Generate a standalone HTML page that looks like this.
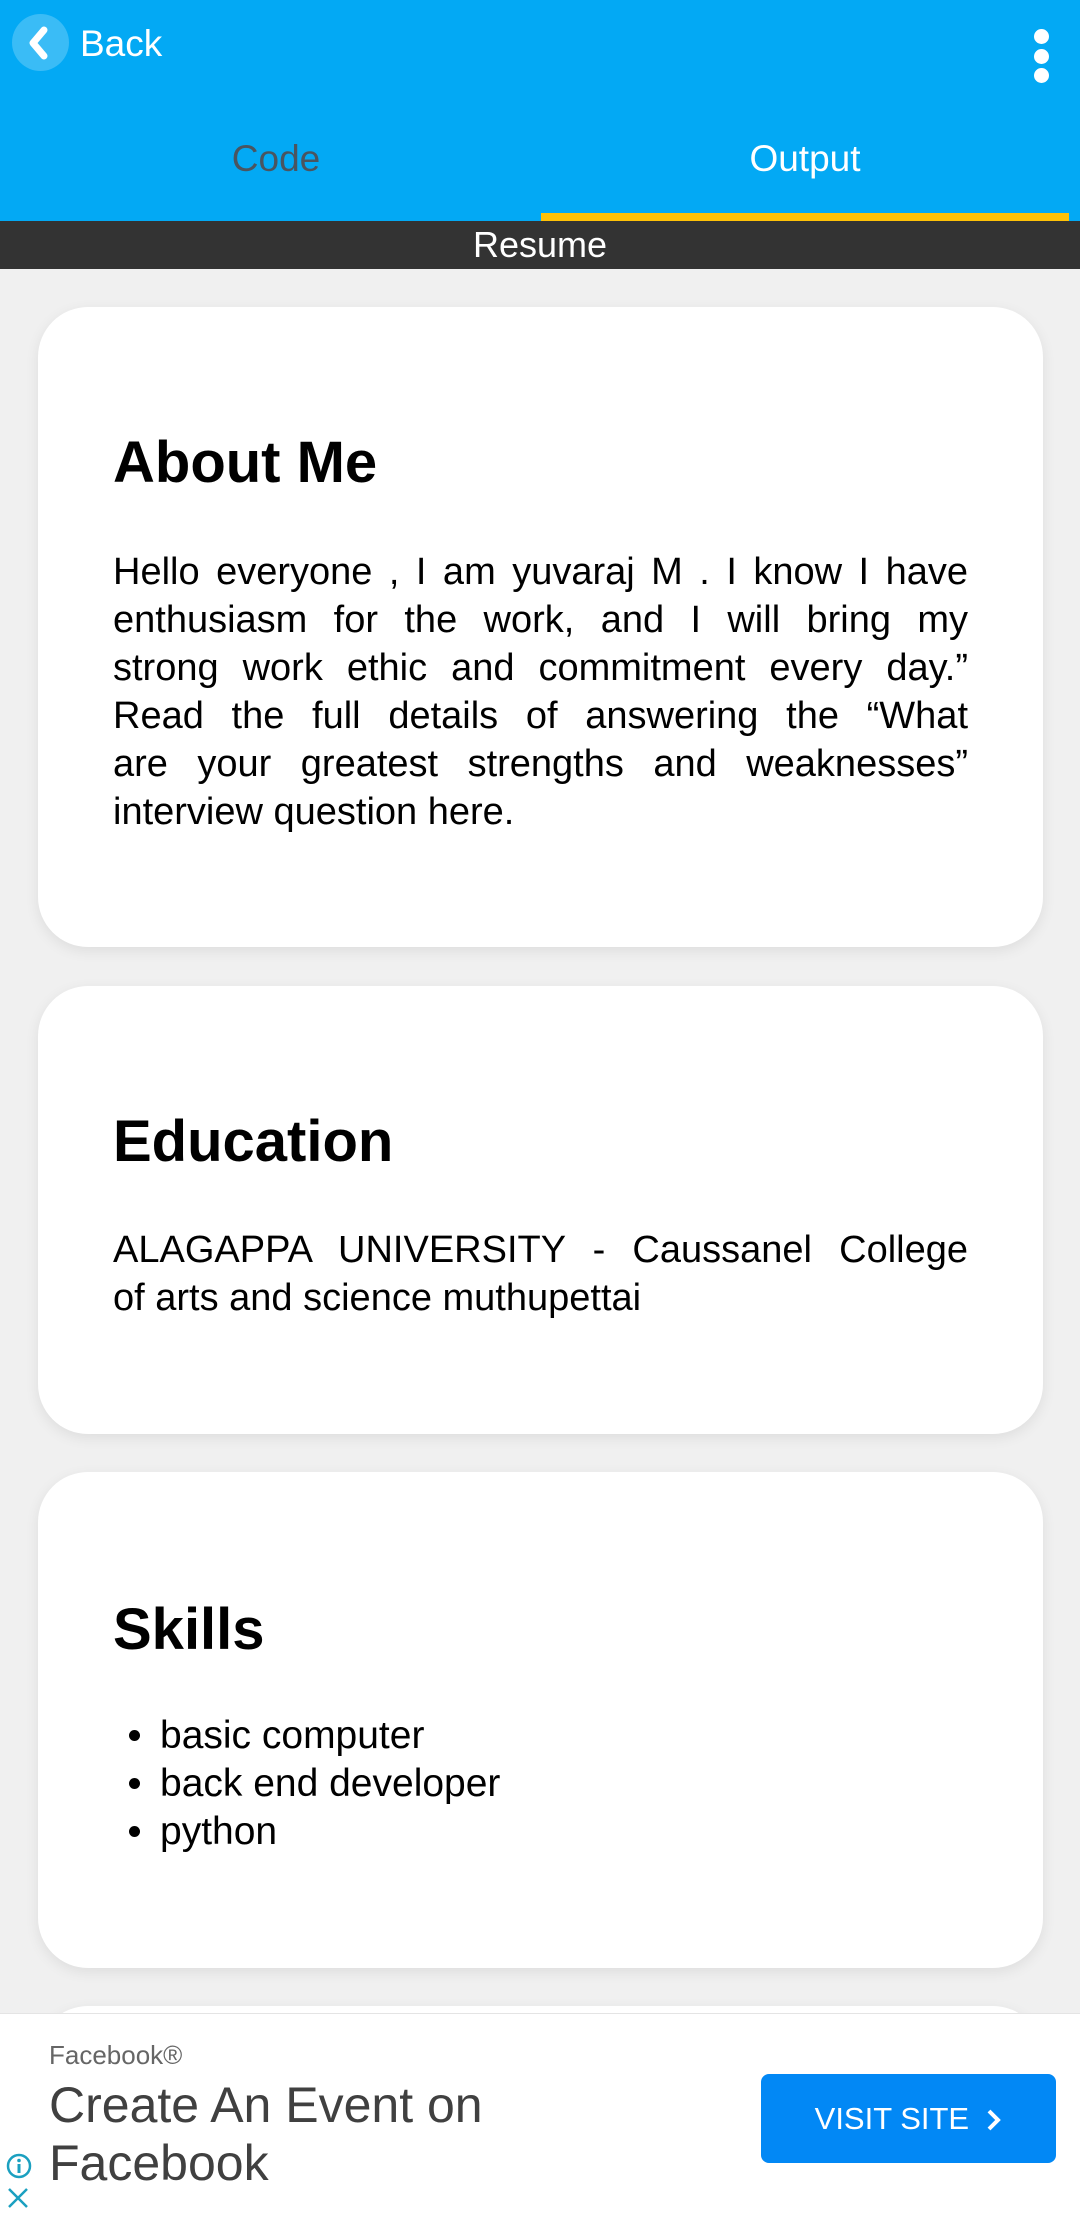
<!DOCTYPE html>
<html><head><meta charset="utf-8"><style>
*{margin:0;padding:0;box-sizing:border-box}
html,body{width:1080px;height:2222px;overflow:hidden}
body{background:#f0f0f0;font-family:"Liberation Sans",Roboto,sans-serif;position:relative}
.hdr{position:absolute;left:0;top:0;width:1080px;height:221px;background:#03A9F4}
.back{position:absolute;left:12px;top:14px;width:57px;height:57px;border-radius:50%;background:rgba(255,255,255,.22)}
.backt{position:absolute;left:80px;top:23px;color:#fff;font-size:37px}
.dot{position:absolute;left:1034px;width:15px;height:15px;border-radius:50%;background:#fff}
.tab{position:absolute;top:138px;font-size:37px;width:540px;text-align:center}
.ind{position:absolute;left:541px;top:213px;width:528px;height:8px;background:#FFC107}
.bar{position:absolute;left:0;top:221px;width:1080px;height:48px;background:#333;color:#fff;font-size:36px;text-align:center;line-height:48px}
.card{position:absolute;left:38px;width:1005px;background:#fff;border-radius:50px;box-shadow:0 4px 14px rgba(0,0,0,.08)}
h2{position:absolute;left:75px;font-size:58px;font-weight:bold;color:#000}
.p{position:absolute;left:75px;width:855px;font-size:38px;line-height:48px;color:#000}
.p div{text-align:justify;text-align-last:justify;white-space:nowrap}
.p div.l{text-align-last:left}
ul{position:absolute;left:75px;list-style:none;font-size:39px;line-height:48px}
li:before{content:"";display:inline-block;width:11px;height:11px;border-radius:50%;background:#000;margin:0 20px 7px 16px}
.ad{position:absolute;left:0;top:2013px;width:1080px;height:209px;background:#fff;border-top:1px solid #e4e4e4}
</style></head><body>
<div class="hdr">
<div class="back"><svg width="57" height="57" viewBox="0 0 57 57"><path d="M32 16 L21 29 L32 42" stroke="#fff" stroke-width="7" fill="none" stroke-linecap="round" stroke-linejoin="round"/></svg></div>
<div class="backt">Back</div>
<div class="dot" style="top:29px"></div><div class="dot" style="top:49px"></div><div class="dot" style="top:68px"></div>
<div class="tab" style="left:6px;color:#4a5560">Code</div>
<div class="tab" style="left:535px;color:#fff">Output</div>
<div class="ind"></div>
</div>
<div class="bar">Resume</div>

<div class="card" style="top:307px;height:640px">
<h2 style="top:122px">About Me</h2>
<div class="p" style="top:241px">
<div>Hello everyone , I am yuvaraj M . I know I have</div>
<div>enthusiasm for the work, and I will bring my</div>
<div>strong work ethic and commitment every day.”</div>
<div>Read the full details of answering the “What</div>
<div>are your greatest strengths and weaknesses”</div>
<div class="l">interview question here.</div>
</div>
</div>
<div class="card" style="top:986px;height:448px">
<h2 style="top:122px">Education</h2>
<div class="p" style="top:240px">
<div>ALAGAPPA UNIVERSITY - Caussanel College</div>
<div class="l">of arts and science muthupettai</div>
</div>
</div>
<div class="card" style="top:1472px;height:496px">
<h2 style="top:124px">Skills</h2>
<ul style="top:240px;left:75px"><li>basic computer</li><li>back end developer</li><li>python</li></ul>
</div>
<div class="card" style="top:2006px;height:216px;border-radius:50px 50px 0 0"></div>

<div class="ad">
<div style="position:absolute;left:49px;top:26px;font-size:26px;color:#666">Facebook®</div>
<div style="position:absolute;left:49px;top:62px;font-size:50px;line-height:58px;color:#404040">Create An Event on<br>Facebook</div>
<div style="position:absolute;left:761px;top:60px;width:295px;height:89px;background:#0288F5;border-radius:8px;color:#fff;font-size:31px;line-height:89px;text-align:center">VISIT SITE &nbsp;<svg width="16" height="24" viewBox="0 0 16 24" style="vertical-align:-3px"><path d="M3 3 L12 12 L3 21" stroke="#fff" stroke-width="4" fill="none"/></svg></div>
<svg style="position:absolute;left:5px;top:138px" width="28" height="28" viewBox="0 0 28 28"><circle cx="14" cy="14" r="11" stroke="#1ba0c0" stroke-width="2.5" fill="none"/><rect x="12.5" y="12" width="3" height="9" fill="#1ba0c0"/><circle cx="14" cy="8.5" r="1.8" fill="#1ba0c0"/></svg>
<svg style="position:absolute;left:6px;top:172px" width="24" height="24" viewBox="0 0 24 24"><path d="M3 3 L21 21 M21 3 L3 21" stroke="#1ba0c0" stroke-width="2.5"/></svg>
</div>
</body></html>
